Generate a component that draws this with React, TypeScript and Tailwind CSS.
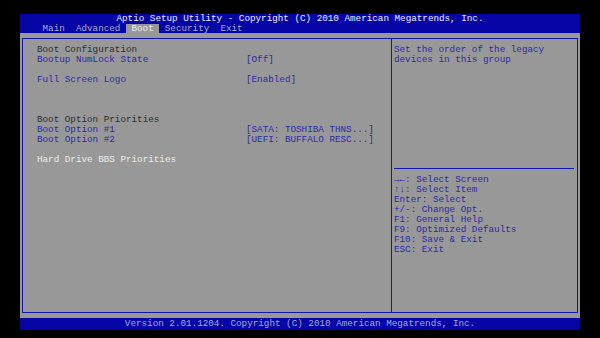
import React from "react";

const tabs = ["Main", "Advanced", "Boot", "Security", "Exit"];

interface Row {
  label?: string;
  value?: string;
  kind?: "head" | "item" | "selected";
}

const rows: Row[] = [
  { label: "Boot Configuration", kind: "head" },
  { label: "Bootup NumLock State", value: "[Off]", kind: "item" },
  {},
  { label: "Full Screen Logo", value: "[Enabled]", kind: "item" },
  {},
  {},
  {},
  { label: "Boot Option Priorities", kind: "head" },
  { label: "Boot Option #1", value: "[SATA: TOSHIBA THNS...]", kind: "item" },
  { label: "Boot Option #2", value: "[UEFI: BUFFALO RESC...]", kind: "item" },
  {},
  { label: "Hard Drive BBS Priorities", kind: "selected" },
];

const help = [
  "→←: Select Screen",
  "↑↓: Select Item",
  "Enter: Select",
  "+/-: Change Opt.",
  "F1: General Help",
  "F9: Optimized Defaults",
  "F10: Save & Exit",
  "ESC: Exit",
];

const labelColor = {
  head: "text-[#2e2e2e]",
  item: "text-[#2a2ab0]",
  selected: "text-[#ececec]",
};

const App: React.FC = () => {
  return (
    <div
      className="w-[600px] h-[338px] bg-black pt-[14px] px-[20px] text-[9.28px] leading-[10px] whitespace-pre"
      style={{ fontFamily: '"Liberation Mono", "DejaVu Sans Mono", monospace' }}
    >
      <div className="h-[316px] flex flex-col">
        <div className="h-[19px] bg-[#0606a6] flex flex-col">
          <div className="h-[10px] text-center text-[#ececf4]">
            Aptio Setup Utility - Copyright (C) 2010 American Megatrends, Inc.
          </div>
          <div className="h-[9px] flex pl-[17px] leading-[9px] text-[#a4a8d4]">
            {tabs.map((t) => (
              <span
                key={t}
                className={
                  t === "Boot" ? "px-[1ch] bg-[#989898] text-[#ececf0]" : "px-[1ch]"
                }
              >
                {t}
              </span>
            ))}
          </div>
        </div>

        <div className="flex-1 bg-[#989898] px-[2px] pt-[5px] pb-[5px] flex">
          <div className="flex-1 border border-[#1414aa] flex">
            <div className="w-[369px] border-r border-[#1414aa] pl-[14px] pt-[6px]">
              {rows.map((r, i) => (
                <div key={i} className="h-[10px] flex">
                  <span className={`w-[209px] ${r.kind ? labelColor[r.kind] : ""}`}>
                    {r.label}
                  </span>
                  {r.value && <span className="text-[#2a2ab0]">{r.value}</span>}
                </div>
              ))}
            </div>
            <div className="flex-1 flex flex-col pt-[6px] text-[#2a2ab0]">
              <div className="h-[123px] pl-[2px]">
                <div>Set the order of the legacy</div>
                <div>devices in this group</div>
              </div>
              <div className="h-px bg-[#1414aa] ml-[2px] mr-[3px]" />
              <div className="pt-[6px] pl-[2px]">
                {help.map((h) => (
                  <div key={h} className="h-[10px]">
                    {h}
                  </div>
                ))}
              </div>
            </div>
          </div>
        </div>

        <div className="h-[12px] bg-[#0606a6] text-center text-[#a4a8d4] leading-[12px]">
          Version 2.01.1204. Copyright (C) 2010 American Megatrends, Inc.
        </div>
      </div>
    </div>
  );
};

export default App;
